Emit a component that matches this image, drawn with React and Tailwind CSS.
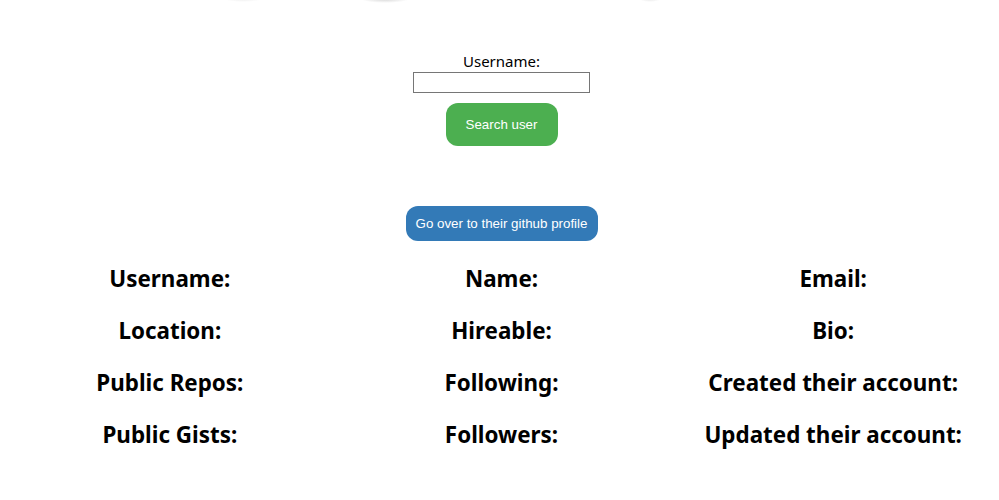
import React, { useState } from "react";

const fields = [
  ["Username:", "Name:", "Email:"],
  ["Location:", "Hireable:", "Bio:"],
  ["Public Repos:", "Following:", "Created their account:"],
  ["Public Gists:", "Followers:", "Updated their account:"],
];

export default function App() {
  const [username, setUsername] = useState("");

  return (
    <div className="min-h-[500px] bg-white pl-[4px] text-black font-['Segoe_UI','Noto_Sans',sans-serif]">
      {/* faint shadows of the cut-off header */}
      <div className="relative h-[3px]">
        <div className="absolute left-[218px] top-[-6px] h-[8px] w-[42px] rounded-full bg-[radial-gradient(ellipse_at_center,#e6e6e6,transparent_70%)]" />
        <div className="absolute left-[356px] top-[-6px] h-[9px] w-[50px] rounded-full bg-[radial-gradient(ellipse_at_center,#cfcfcf,transparent_70%)]" />
        <div className="absolute left-[634px] top-[-6px] h-[8px] w-[24px] rounded-full bg-[radial-gradient(ellipse_at_center,#dcdcdc,transparent_70%)]" />
      </div>

      <form
        className="flex flex-col items-center pt-[48px]"
        onSubmit={(e) => e.preventDefault()}
      >
        <label htmlFor="username" className="text-[15px] leading-[20px]">
          Username:
        </label>
        <input
          id="username"
          value={username}
          onChange={(e) => setUsername(e.target.value)}
          className="mt-[1px] h-[21px] w-[177px] border border-[#767676] bg-white px-[2px] text-[13px] outline-none"
        />
        <button
          type="submit"
          className="mt-[10px] h-[43px] w-[112px] rounded-[12px] bg-[#4caf50] font-['Liberation_Sans',Arial,sans-serif] text-[13.33px] text-white"
        >
          Search user
        </button>
      </form>

      <div className="mt-[60px] flex justify-center">
        <button className="h-[35px] w-[192px] rounded-[12px] bg-[#337ab7] font-['Liberation_Sans',Arial,sans-serif] text-[13.33px] text-white">
          Go over to their github profile
        </button>
      </div>

      <div className="mt-[22px] grid grid-cols-3">
        {fields.map((row) =>
          row.map((f) => (
            <h2
              key={f}
              className="h-[52px] text-center text-[22.4px] font-bold leading-[32px]"
            >
              {f}
            </h2>
          ))
        )}
      </div>
    </div>
  );
}
